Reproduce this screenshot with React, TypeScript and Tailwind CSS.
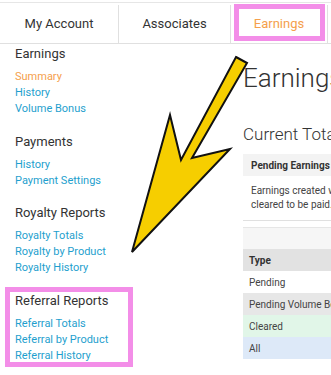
import React from "react";

const Link = ({ children, active }: { children: React.ReactNode; active?: boolean }) => (
  <div className={`text-[11px] leading-[16px] ${active ? "text-[#f5a04c]" : "text-[#1f9fce]"}`}>{children}</div>
);

const Section = ({ title, links, first }: { title: string; links: string[]; first?: boolean }) => (
  <div className={first ? "" : "mt-[14.5px]"}>
    <div className="text-[13px] leading-[20px] text-[#333] mb-[5px]">{title}</div>
    {links.map((l, i) => (
      <Link key={l} active={first && i === 0}>
        {l}
      </Link>
    ))}
  </div>
);

export default function App() {
  return (
    <div
      className="relative w-[331px] h-[375px] overflow-hidden bg-white text-[#333]"
      style={{ fontFamily: "Roboto, 'Liberation Sans', sans-serif" }}
    >
      {/* Tabs */}
      <div className="mt-[2px] border-t border-[#e6e6e6]">
        <div className="flex pt-[2px] border-b border-[#e0e0e0] w-[340px]">
          <div className="w-[118px] h-[38px] flex items-center justify-center text-[13px] text-[#333]">My Account</div>
          <div className="w-[112px] h-[38px] flex items-center justify-center text-[13px] text-[#333] border-l border-[#e0e0e0]">
            Associates
          </div>
          <div className="relative w-[98px] h-[38px] flex items-center justify-center text-[13px] text-[#f5a04c] border-l border-r border-[#e0e0e0]">
            Earnings
            <div className="absolute left-[3px] top-[-1px] w-[91px] h-[37px] border-[5px] border-[#f38ee8]" />
          </div>
        </div>
      </div>

      <div className="flex">
        {/* Sidebar */}
        <div className="w-[243px] shrink-0 pl-[15px]">
          <Section first title="Earnings" links={["Summary", "History", "Volume Bonus"]} />
          <Section title="Payments" links={["History", "Payment Settings"]} />
          <Section title="Royalty Reports" links={["Royalty Totals", "Royalty by Product", "Royalty History"]} />
          <div className="relative">
            <Section title="Referral Reports" links={["Referral Totals", "Referral by Product", "Referral History"]} />
            <div className="absolute left-[-10px] top-[-4px] w-[128px] h-[80px] border-[5px] border-[#f38ee8]" />
          </div>
        </div>

        {/* Main */}
        <div className="w-[320px] shrink-0">
          <div className="mt-[20px] text-[26px] leading-[28px] font-light text-[#333] whitespace-nowrap">Earnings Summary</div>
          <div className="mt-[32px] text-[17px] leading-[20px] font-light text-[#333] whitespace-nowrap">Current Totals</div>
          <div className="mt-[10px] text-[10px]">
            <div className="h-[22px] bg-[#f3f3f3] flex items-center px-[8px] font-bold text-[#333] whitespace-nowrap">Pending Earnings</div>
            <div className="px-[8px] py-[8px] leading-[14px] text-[#444] border-b border-[#e0e0e0] whitespace-nowrap">
              <div>Earnings created when a sale has not yet been</div>
              <div>cleared to be paid.</div>
            </div>
          </div>
          <div className="mt-[6px] text-[10px] border-t border-[#e6e6e6]">
            <div className="h-[21px] bg-[#f6f6f6]" />
            <div className="h-[22px] bg-[#e2e2e2] flex items-center px-[6px] font-bold text-[#333]">Type</div>
            <div className="h-[22px] flex items-center px-[6px] text-[#444]">Pending</div>
            <div className="h-[22px] bg-[#e7e7e7] flex items-center px-[6px] text-[#444] whitespace-nowrap">Pending Volume Bonus</div>
            <div className="h-[22px] bg-[#e1f6e8] flex items-center px-[6px] text-[#444]">Cleared</div>
            <div className="h-[22px] bg-[#dde9f8] flex items-center px-[6px] text-[#444]">All</div>
          </div>
        </div>
      </div>

      {/* Arrow annotation */}
      <svg className="absolute left-0 top-0 pointer-events-none" width="331" height="375" viewBox="0 0 331 375">
        <polygon
          points="236,57 247,63 192,158 230,149 132,252 170,115 181,160"
          fill="#f6ce00"
          stroke="#111"
          strokeWidth="2"
          strokeLinejoin="miter"
        />
      </svg>
    </div>
  );
}
